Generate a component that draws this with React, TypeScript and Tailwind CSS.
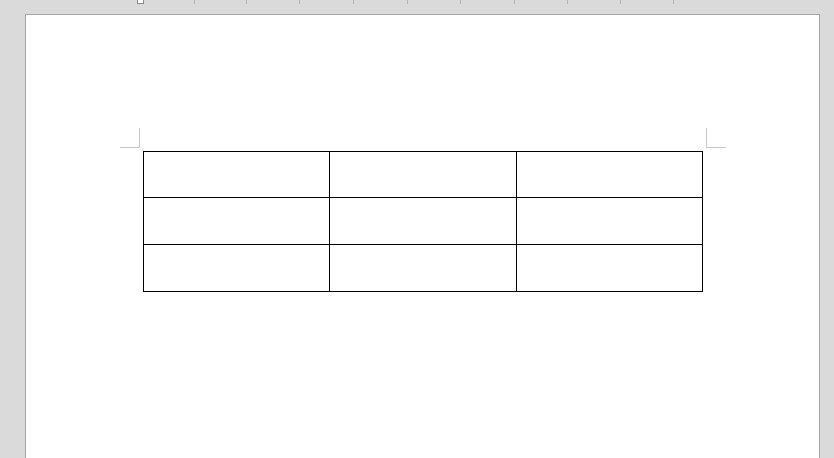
const TICKS = ['ml-[194px]', 'ml-[51px]', 'ml-[52px]', 'ml-[53px]', 'ml-[53px]', 'ml-[52px]', 'ml-[53px]', 'ml-[52px]', 'ml-[52px]', 'ml-[52px]'];

export default function App() {
  return (
    <div className="h-[458px] w-[834px] overflow-hidden bg-[#dadada]" style={{ fontFamily: '"Liberation Sans", sans-serif' }}>
      {/* ruler strip */}
      <div className="relative flex h-[14px] items-start">
        <div className="absolute left-[137px] top-[-3px] h-[7px] w-[7px] border border-[#8a8a8a] bg-white" />
        {TICKS.map((c, i) => (
          <div key={i} className={`${c} h-[4px] w-px shrink-0 bg-[#b4b4b4]`} />
        ))}
      </div>

      {/* page */}
      <div className="ml-[25px] h-[460px] w-[795px] border-x border-t border-[#a5a5a5] bg-white pl-[94px] pt-[113px]">
        <div className="grid grid-cols-[20px_560px_20px] gap-x-[3px]">
          <div className="h-[20px] border-b border-r border-[#c6c6c6]" />
          <div />
          <div className="h-[20px] border-b border-l border-[#c6c6c6]" />

          <div />
          <div className="mt-[3px] grid grid-cols-[185px_186px_185px] grid-rows-[45px_46px_46px] gap-px bg-black p-px">
            {Array.from({ length: 9 }).map((_, i) => (
              <div key={i} className="bg-white" />
            ))}
          </div>
          <div />
        </div>
      </div>
    </div>
  );
}
